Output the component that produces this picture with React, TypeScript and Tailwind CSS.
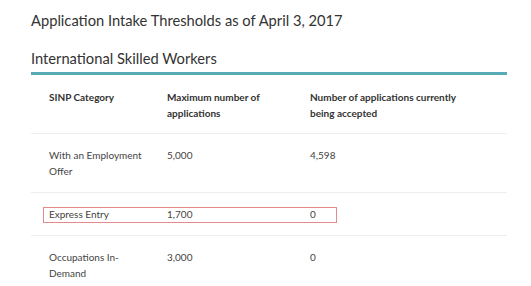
import React from "react";

type Row = {
  category: string[];
  max: string;
  current: string;
  highlight?: boolean;
};

const rows: Row[] = [
  { category: ["With an Employment", "Offer"], max: "5,000", current: "4,598" },
  { category: ["Express Entry"], max: "1,700", current: "0", highlight: true },
  { category: ["Occupations In-", "Demand"], max: "3,000", current: "0" },
];

const Lines = ({ lines }: { lines: string[] }) => (
  <>
    {lines.map((l, i) => (
      <div key={i}>{l}</div>
    ))}
  </>
);

export default function App() {
  return (
    <div
      className="w-[531px] h-[286px] overflow-hidden bg-white pl-[31px] pr-[24px] pt-[10px] text-[#333]"
      style={{ fontFamily: "Lato, 'Open Sans', sans-serif" }}
    >
      <h1 className="text-[14.7px] leading-[20px] text-[#333]">
        Application Intake Thresholds as of April 3, 2017
      </h1>
      <h2 className="mt-[18px] text-[14.7px] leading-[20px] text-[#333] pb-[4px] border-b-[3px] border-[#56abb5]">
        International Skilled Workers
      </h2>

      <div className="text-[10px] leading-[16px] text-[#444]">
        {/* header */}
        <div className="grid grid-cols-[118px_143px_1fr] pl-[18px] pt-[14px] pb-[12px] border-b border-[#eeeeee] font-bold text-[#333]">
          <div>SINP Category</div>
          <div>
            <Lines lines={["Maximum number of", "applications"]} />
          </div>
          <div>
            <Lines lines={["Number of applications currently", "being accepted"]} />
          </div>
        </div>

        {rows.map((r, i) => (
          <div
            key={i}
            className="relative grid grid-cols-[118px_143px_1fr] pl-[18px] py-[13px] border-b border-[#eeeeee] last:border-b-0"
          >
            <div>
              <Lines lines={r.category} />
            </div>
            <div>{r.max}</div>
            <div>{r.current}</div>
            {r.highlight && (
              <div className="absolute left-[12px] top-[14px] w-[294px] h-[16px] border border-[#e58a8a]" />
            )}
          </div>
        ))}
      </div>
    </div>
  );
}
